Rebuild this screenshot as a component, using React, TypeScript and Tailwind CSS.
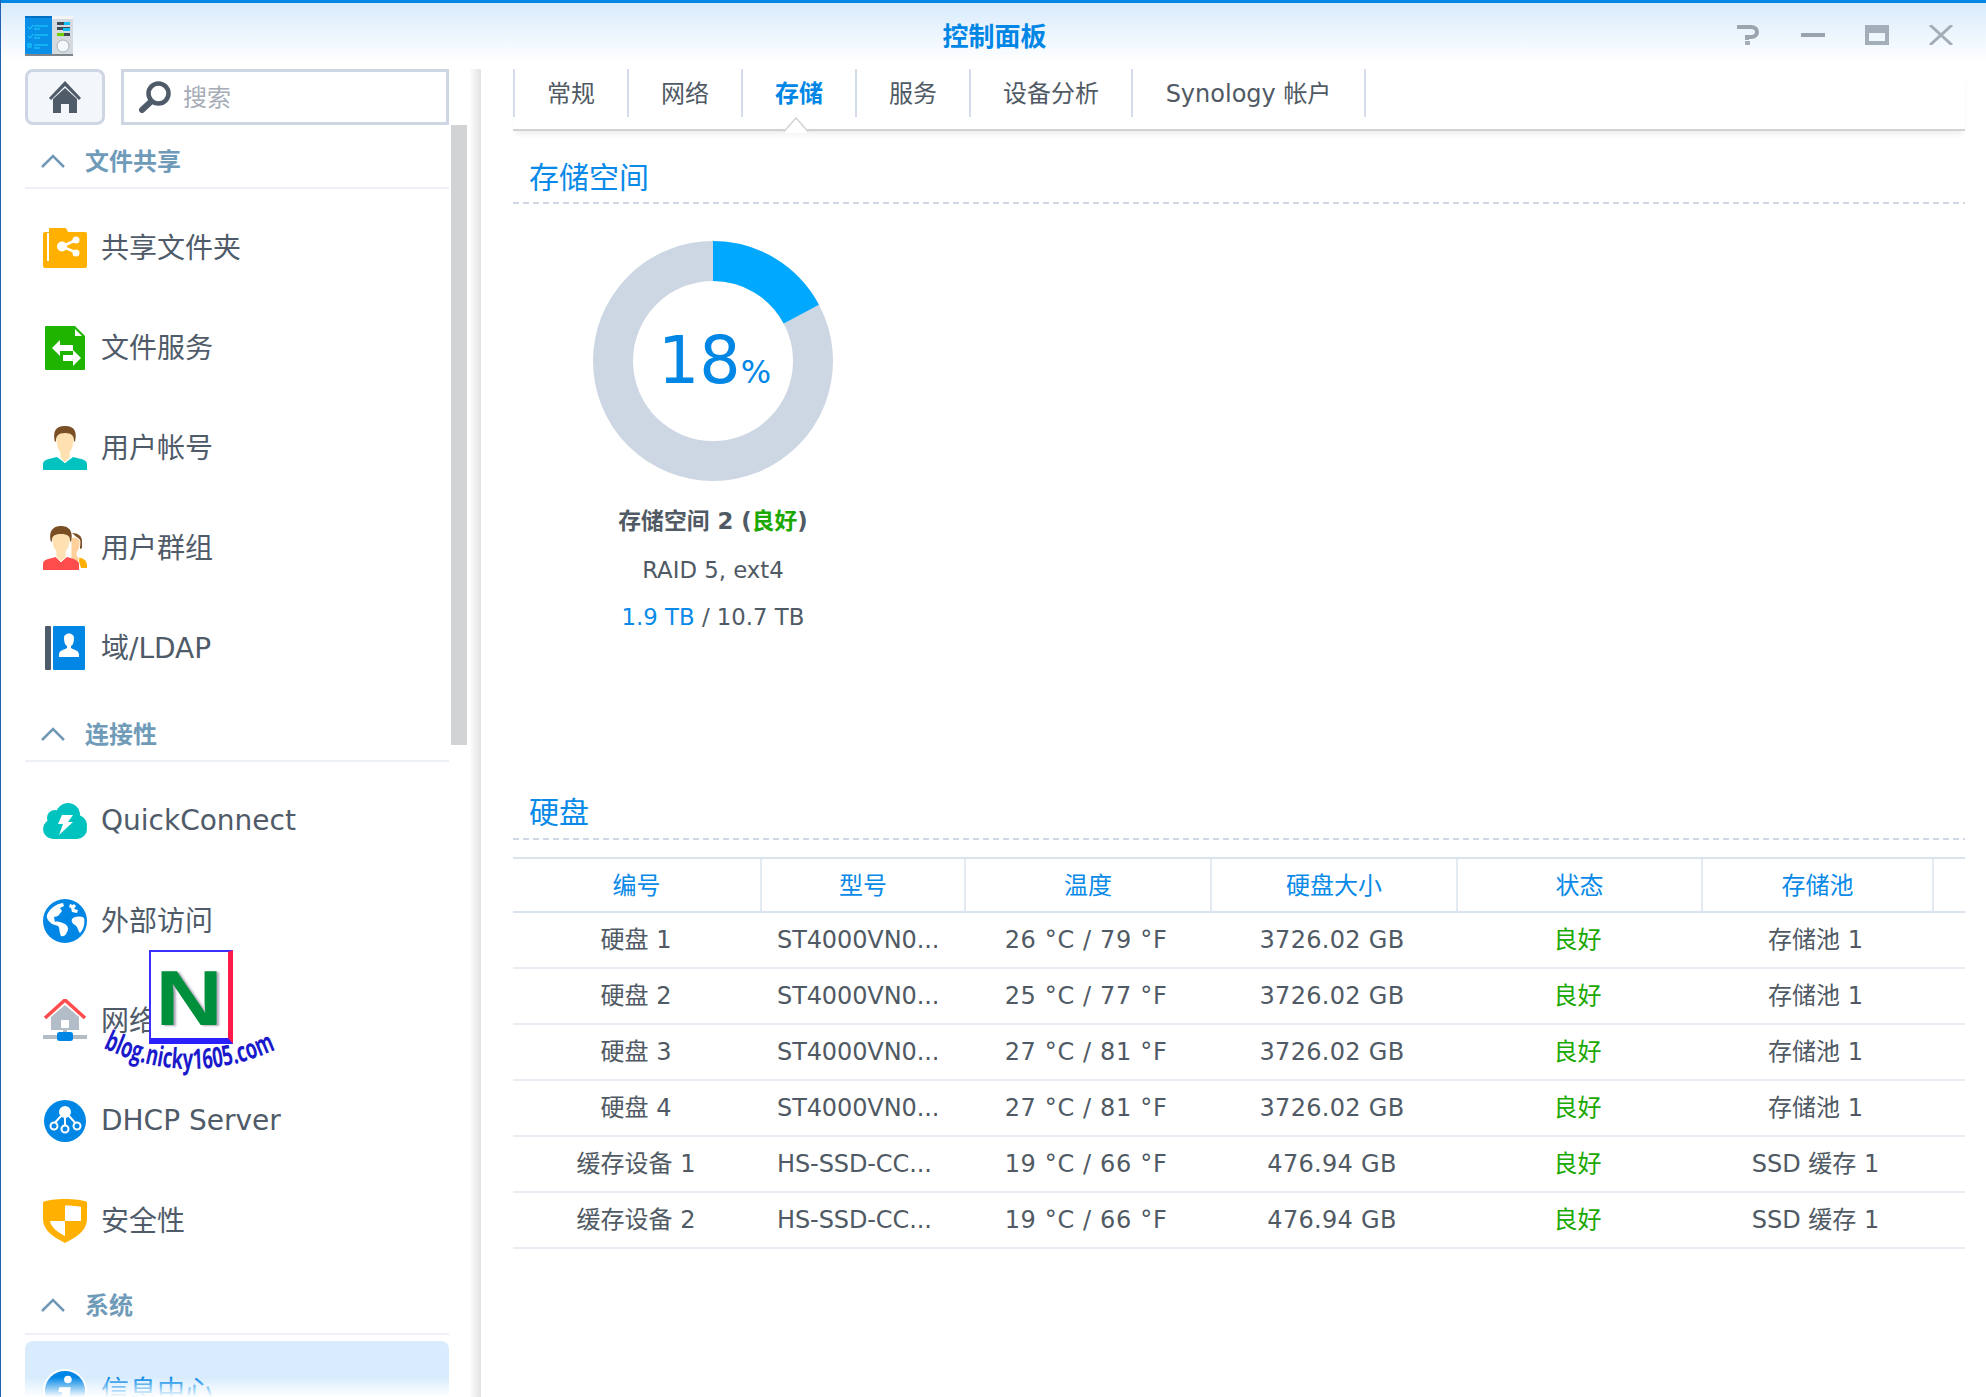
import type { ReactNode } from 'react';

const FONT = 'font-["DejaVu_Sans","Noto_Sans_CJK_SC",sans-serif]';

function AppLogo() {
  return (
    <svg width="48" height="40" viewBox="0 0 48 40">
      <rect x="0" y="0" width="48" height="39" rx="1" fill="#d4dade" />
      <rect x="27" y="0" width="21" height="3" fill="#f2f4f5" />
      <rect x="0" y="38" width="48" height="2" fill="#7e868c" />
      <rect x="0" y="0" width="27" height="38" rx="1" fill="#0a8fe8" />
      <rect x="0" y="0" width="27" height="2" fill="#0070c4" />
      <path d="M3 11l2 2 3-4M3 20l2 2 3-4" stroke="#19d4ff" strokeWidth="1" fill="none" />
      <rect x="3" y="28" width="3" height="3" fill="none" stroke="#19d4ff" strokeWidth="1" />
      <path d="M9 10h14M9 13h6M9 19h14M9 22h6M9 29h14M9 32h6" stroke="#19d4ff" strokeWidth="1" />
      <rect x="32" y="6" width="13" height="3" fill="#3e4a55" />
      <rect x="39" y="6" width="6" height="3" fill="#10c0f5" />
      <rect x="32" y="11" width="13" height="3" fill="#3e4a55" />
      <rect x="38" y="12" width="7" height="3" fill="#10c0f5" />
      <rect x="32" y="17" width="13" height="3" fill="#3e4a55" />
      <rect x="32" y="17" width="7" height="3" fill="#6fd000" />
      <circle cx="38" cy="30" r="6" fill="#f4f8fa" stroke="#aab3b8" />
    </svg>
  );
}

function HomeIcon() {
  return (
    <svg width="32" height="32" viewBox="0 0 32 32" fill="#4f5b69">
      <path d="M16 0L32 17l-2 2L16 5 2 19l-2-2z" />
      <path d="M4 18L16 7l12 11v14H20V23h-8v9H4z" />
    </svg>
  );
}

function SearchIcon() {
  return (
    <svg width="32" height="32" viewBox="0 0 32 32" fill="none" stroke="#4f5b69">
      <circle cx="19.5" cy="12.5" r="10" strokeWidth="4.5" />
      <path d="M11.5 21L3 29" strokeWidth="6" strokeLinecap="round" />
    </svg>
  );
}

function FolderIcon() {
  return (
    <svg width="44" height="40" viewBox="0 0 44 40">
      <path d="M0 6a2 2 0 0 1 2-2h4V1a1 1 0 0 1 1-1h16l2 4h17a2 2 0 0 1 2 2v32a2 2 0 0 1-2 2H2a2 2 0 0 1-2-2z" fill="#ffb000" />
      <rect x="4" y="5" width="2" height="28" fill="#fff" />
      <path d="M33 12L19 18.5 33 24.5" stroke="#fff" strokeWidth="2.5" fill="none" />
      <circle cx="33" cy="12" r="3.5" fill="#fff" />
      <circle cx="19" cy="18.5" r="5" fill="#fff" />
      <circle cx="33" cy="25" r="3.5" fill="#fff" />
    </svg>
  );
}

function FileIcon() {
  return (
    <svg width="40" height="44" viewBox="0 0 40 44">
      <path d="M1 0h29l10 10v33a1 1 0 0 1-1 1H1a1 1 0 0 1-1-1V1a1 1 0 0 1 1-1z" fill="#1fb400" />
      <path d="M30 3l7 7h-7z" fill="#fff" />
      <path d="M7 22l8-8v5h13v6H15v5z" fill="#fff" />
      <path d="M36 32l-8 8v-5H18v-6h10v-5z" fill="#fff" />
    </svg>
  );
}

function UserIcon() {
  return (
    <svg width="44" height="44" viewBox="0 0 44 44">
      <path d="M0 44v-6c0-4 5-5 14-7l8 6 8-6c9 2 14 3 14 7v6z" fill="#00c3c0" />
      <path d="M13 10c0-8 18-8 18 0 0 8-1 13-4 16v5l-5 6-5-6v-5c-3-3-4-8-4-16z" fill="#ffe0b0" stroke="#fff" strokeWidth="0.8" />
      <path d="M12 16C9 3 15 0 22 0s13 3 10 16l-1-1c0-5-2-8-9-8s-9 3-9 8z" fill="#7a4f25" />
    </svg>
  );
}

function GroupIcon() {
  return (
    <svg width="44" height="44" viewBox="0 0 44 44">
      <path d="M35 32c5-1 9 3 9 8v2h-6z" fill="#ffb000" />
      <path d="M29 7c6 0 10 3 10 8v7l-2 1V14z" fill="#7a4f25" />
      <path d="M28 12c4-2 9 0 9 4 0 5-1 8-3 10v4l2 2-1 6-7-6z" fill="#ffd09a" stroke="#fff" strokeWidth="0.8" />
      <path d="M0 44v-6c0-4 4-5 13-7l5 5 6-5c8 2 12 4 12 7v6z" fill="#ff4c4c" />
      <path d="M9 11c0-7 18-7 18 0 0 7-1 11-4 14v6l-5 5-5-5v-6c-3-3-4-7-4-14z" fill="#ffe0b0" stroke="#fff" strokeWidth="0.8" />
      <path d="M8 16C5 4 11 0 18 0s13 4 10 16l-1-1c0-5-2-7-9-7s-9 2-9 7z" fill="#7a4f25" />
    </svg>
  );
}

function LdapIcon() {
  return (
    <svg width="40" height="44" viewBox="0 0 40 44">
      <rect x="0" y="0" width="6" height="44" rx="1" fill="#4d5b6b" />
      <rect x="8" y="0" width="32" height="44" rx="1" fill="#0086e5" />
      <path d="M19 12c0-6 10-6 10 0 0 4-1 7-3 8v2c3 2 8 2 8 7v2H14v-2c0-5 5-5 8-7v-2c-2-1-3-4-3-8z" fill="#fff" />
    </svg>
  );
}

function CloudIcon() {
  return (
    <svg width="44" height="36" viewBox="0 0 44 36">
      <g fill="#00c3bf">
        <circle cx="25" cy="12" r="12" />
        <circle cx="12" cy="15" r="8" />
        <circle cx="34" cy="22" r="10" />
        <rect x="0" y="16" width="44" height="20" rx="10" />
      </g>
      <path d="M19 12h11l-5 7h5L16 32l4-11h-5z" fill="#fff" />
    </svg>
  );
}

function GlobeIcon() {
  return (
    <svg width="44" height="44" viewBox="0 0 44 44">
      <circle cx="22" cy="22" r="22" fill="#0086e5" />
      <path d="M20 4C13 5 7 9 4 16c-1 4 2 6 5 9l6 2c2 2 1 6 3 10 3 1 5-1 6-4 2-3 1-6-2-8-4-2-8-3-10-2l-1-5 4-1 4-5-2-3 4-2z" fill="#fff" />
      <path d="M29 20c3-3 9-3 12-1 1 5 0 11-4 15-2-2-2-6-5-8-2-1-4-3-3-6zM27 5l3 1 1-1 2 2-2 3 4 1-1 3-5-1-1-4-2-1z" fill="#fff" />
    </svg>
  );
}

function HouseIcon() {
  return (
    <svg width="44" height="44" viewBox="0 0 44 44">
      <path d="M8 18L22 6l14 12v13H8z" fill="#b3bdc8" />
      <path d="M2 19L22 1l20 18" fill="none" stroke="#ff4c4c" strokeWidth="3.500" />
      <rect x="18" y="21" width="8" height="8" rx="1" fill="#fff" />
      <rect x="20" y="31" width="4" height="5" fill="#b3bdc8" />
      <rect x="0" y="36" width="44" height="4" fill="#b3bdc8" />
      <rect x="14" y="33" width="16" height="9" rx="2.500" fill="#0086e5" />
    </svg>
  );
}

function DhcpIcon() {
  return (
    <svg width="42" height="42" viewBox="0 0 42 42">
      <circle cx="21" cy="21" r="21" fill="#0086e5" />
      <circle cx="21" cy="12" r="6" fill="#fff" />
      <path d="M21 14v16M17 16L8 26M25 16l9 10" stroke="#fff" strokeWidth="2" />
      <circle cx="21" cy="29" r="3.500" fill="#0086e5" stroke="#fff" strokeWidth="2" />
      <circle cx="10" cy="26" r="3.500" fill="#0086e5" stroke="#fff" strokeWidth="2" />
      <circle cx="33" cy="26" r="3.500" fill="#0086e5" stroke="#fff" strokeWidth="2" />
    </svg>
  );
}

function ShieldIcon() {
  return (
    <svg width="44" height="44" viewBox="0 0 44 44">
      <path d="M0 3c8-4 36-4 44 0v17c0 10-8 17-22 24C8 37 0 30 0 20z" fill="#ffb000" />
      <path d="M22 6.500c6 0 12 .5 16 1.500v14H22zM22 22H7c1 6 7 11 15 15z" fill="#fff" />
    </svg>
  );
}

function InfoIcon() {
  return (
    <svg width="46" height="46" viewBox="0 0 46 46">
      <circle cx="23" cy="23" r="22" fill="#0086e5" stroke="#fff" strokeWidth="2" />
      <circle cx="26" cy="11" r="4" fill="#fff" />
      <path d="M17 19h12l-3 18h-8l2-13h-4z" fill="#fff" />
    </svg>
  );
}

function Chevron() {
  return (
    <svg width="24" height="14" viewBox="0 0 24 14" fill="none" stroke="#7098b5" strokeWidth="2.500">
      <path d="M1 13L12 2l11 11" />
    </svg>
  );
}

function GroupHeader({ label, last }: { label: string; last?: boolean }) {
  return (
    <div
      className={`flex h-[64px] items-center border-b-2 border-[#edf0f4] pl-[16px] ${last ? 'mb-[6px] pt-[6px]' : 'mb-[9px] pt-[9px]'}`}
    >
      <Chevron />
      <span className="ml-[20px] pt-[2px] text-[24px] font-bold text-[#6f9bb9]">{label}</span>
    </div>
  );
}

function NavItem({
  icon,
  label,
  active,
  latin,
}: {
  icon: ReactNode;
  label: string;
  active?: boolean;
  latin?: boolean;
}) {
  return (
    <div className={`flex h-[100px] items-center rounded-lg ${active ? 'bg-[#d8ecfd]' : ''}`}>
      <div className="ml-[18px] mr-[14px] flex w-[44px] justify-center">{icon}</div>
      <span className={`text-[28px] ${latin ? '' : 'pt-[2px]'} ${active ? 'text-[#0086e5]' : 'text-[#4f5b69]'}`}>{label}</span>
    </div>
  );
}

function Sidebar() {
  return (
    <aside className="relative flex w-[480px] shrink-0 flex-col pl-[24px]">
      <div className="flex h-[56px] w-[424px] gap-[16px]">
        <div className="flex w-[80px] items-center justify-center rounded-lg border-[3px] border-[#cdd6e2] bg-[#f3f6fa]">
          <HomeIcon />
        </div>
        <div className="flex flex-1 items-center border-[3px] border-[#cdd6e2] pl-[15px]">
          <SearchIcon />
          <span className="ml-[12px] pt-[2px] text-[24px] text-[#a6adb7]">搜索</span>
        </div>
      </div>
      <div className="relative w-[442px] flex-1 overflow-hidden">
        <div className="absolute left-[426px] top-0 h-[620px] w-[16px] bg-[#d2d3d5]" />
        <div className="w-[424px]">
          <GroupHeader label="文件共享" />
          <NavItem icon={<FolderIcon />} label="共享文件夹" />
          <NavItem icon={<FileIcon />} label="文件服务" />
          <NavItem icon={<UserIcon />} label="用户帐号" />
          <NavItem icon={<GroupIcon />} label="用户群组" />
          <NavItem icon={<LdapIcon />} label="域/LDAP" />
          <GroupHeader label="连接性" />
          <NavItem icon={<CloudIcon />} label="QuickConnect" latin />
          <NavItem icon={<GlobeIcon />} label="外部访问" />
          <NavItem icon={<HouseIcon />} label="网络" />
          <NavItem icon={<DhcpIcon />} label="DHCP Server" latin />
          <NavItem icon={<ShieldIcon />} label="安全性" />
          <GroupHeader label="系统" last />
          <NavItem icon={<InfoIcon />} label="信息中心" active />
        </div>
        <div className="absolute bottom-0 left-0 h-[20px] w-full bg-gradient-to-b from-white/0 to-white" />
      </div>
      <div className="absolute bottom-0 right-0 top-0 w-[12px] bg-gradient-to-r from-white to-[#e2e2e2]" />
    </aside>
  );
}

const TABS = [
  { label: '常规', width: 'w-[114px]' },
  { label: '网络', width: 'w-[114px]' },
  { label: '存储', width: 'w-[114px]', active: true },
  { label: '服务', width: 'w-[114px]' },
  { label: '设备分析', width: 'w-[162px]' },
  { label: 'Synology 帐户', width: 'w-[233px]' },
];

function Tabs() {
  return (
    <div className="relative h-[62px] border-b-2 border-[#d2d2d2] shadow-[0_5px_5px_-2px_rgba(0,0,0,0.07)]">
      <div className="flex h-[48px] border-l-2 border-[#d3dce8]">
        {TABS.map((tab) => (
          <div
            key={tab.label}
            className={`flex items-center justify-center border-r-2 border-[#d3dce8] pt-[2px] text-[24px] ${tab.width} ${
              tab.active ? 'font-bold text-[#0086e5]' : 'text-[#505a64]'
            }`}
          >
            {tab.label}
          </div>
        ))}
      </div>
      <svg className="absolute left-[270px] top-[48px]" width="26" height="16" viewBox="0 0 26 16">
        <path d="M0 14.500h1L13 .8 25 14.500h1V16H0z" fill="#fff" />
        <path d="M0 14h1.500L13 1l11.500 13H26" fill="none" stroke="#d2d2d2" strokeWidth="1.500" />
      </svg>
    </div>
  );
}

function SectionTitle({ label, height, gap }: { label: string; height: string; gap: string }) {
  return (
    <div className={`flex flex-col justify-end ${height}`}>
      <h2 className={`pl-[16px] text-[30px] font-normal leading-[42px] text-[#0a8ae8] ${gap}`}>{label}</h2>
      <div className="h-[2px] bg-[repeating-linear-gradient(90deg,#cfd8e4_0_6px,transparent_6px_10px)]" />
    </div>
  );
}

function Donut() {
  return (
    <div className="relative h-[240px] w-[240px]">
      <svg width="240" height="240" viewBox="0 0 240 240" className="-rotate-90">
        <circle cx="120" cy="120" r="100" fill="none" stroke="#cdd7e3" strokeWidth="40" />
        <circle cx="120" cy="120" r="100" fill="none" stroke="#00a9ff" strokeWidth="40" strokeDasharray="108 628.3" />
      </svg>
      <div className="absolute inset-0 flex items-baseline justify-center pl-[3px] pt-[82px] text-[#0086e5]">
        <span className="text-[65px] leading-[76px]">18</span>
        <span className="text-[32px]">%</span>
      </div>
    </div>
  );
}

const COLUMNS = [
  { label: '编号', width: 'w-[249px]' },
  { label: '型号', width: 'w-[204px]' },
  { label: '温度', width: 'w-[246px]' },
  { label: '硬盘大小', width: 'w-[246px]' },
  { label: '状态', width: 'w-[245px]' },
  { label: '存储池', width: 'w-[231px]' },
];

const DISKS = [
  ['硬盘 1', 'ST4000VN0...', '26 °C / 79 °F', '3726.02 GB', '存储池 1'],
  ['硬盘 2', 'ST4000VN0...', '25 °C / 77 °F', '3726.02 GB', '存储池 1'],
  ['硬盘 3', 'ST4000VN0...', '27 °C / 81 °F', '3726.02 GB', '存储池 1'],
  ['硬盘 4', 'ST4000VN0...', '27 °C / 81 °F', '3726.02 GB', '存储池 1'],
  ['缓存设备 1', 'HS-SSD-CC...', '19 °C / 66 °F', '476.94 GB', 'SSD 缓存 1'],
  ['缓存设备 2', 'HS-SSD-CC...', '19 °C / 66 °F', '476.94 GB', 'SSD 缓存 1'],
];

function DiskTable() {
  return (
    <div className="mt-[17px] text-[24px]">
      <div className="flex h-[56px] border-b-2 border-t-2 border-[#dbe4ee] text-[#0a8ae8]">
        {COLUMNS.map((col) => (
          <div key={col.label} className={`flex items-center justify-center border-r-2 border-[#e3eaf2] pt-[2px] ${col.width}`}>
            {col.label}
          </div>
        ))}
      </div>
      {DISKS.map((disk) => (
        <div key={disk[0]} className="flex h-[56px] items-center border-b-2 border-[#e8edf3] text-[#505a64]">
          <div className="w-[246px] text-center">{disk[0]}</div>
          <div className="w-[204px] pl-[18px] tracking-[-0.1px]">{disk[1]}</div>
          <div className="w-[246px] text-center tracking-[0.65px]">{disk[2]}</div>
          <div className="w-[246px] text-center tracking-[0.3px]">{disk[3]}</div>
          <div className="w-[245px] text-center text-[#1ba800]">良好</div>
          <div className="w-[231px] text-center">{disk[4]}</div>
        </div>
      ))}
    </div>
  );
}

function Watermark() {
  return (
    <>
      <div className="absolute left-[148px] top-[950px] flex h-[94px] w-[84px] items-center justify-center border-b-[6px] border-l-2 border-r-[5px] border-t-2 border-b-[#2a1fff] border-l-[#3a30ff] border-r-[#ff1a4a] border-t-[#3a30ff] bg-white pt-[5px]">
        <span className='scale-x-[1.2] font-["Liberation_Sans",sans-serif] text-[78px] font-bold leading-none text-[#00903c] [text-shadow:2px_1px_2px_rgba(60,40,90,0.4)]'>
          N
        </span>
      </div>
      <svg className="absolute left-[100px] top-[1020px]" width="185" height="70" viewBox="100 1020 185 70">
        <defs>
          <path id="wm-arc" d="M102 1048Q190 1090 278 1048" fill="none" />
        </defs>
        <text fontFamily="Open Sans, sans-serif" fontSize="28" fontWeight="700" fill="#1a1acc">
          <textPath href="#wm-arc" textLength="179" lengthAdjust="spacingAndGlyphs">
            blog.nicky1605.com
          </textPath>
        </text>
      </svg>
    </>
  );
}

export default function App() {
  return (
    <div className={`relative flex h-[1397px] w-[1986px] flex-col overflow-hidden border-l border-[#2060b0] bg-white ${FONT}`}>
      <header className="relative flex h-[62px] shrink-0 items-center justify-center border-t-[3px] border-[#0086e5] bg-gradient-to-b from-[#d8ebfb] to-white">
        <div className="absolute left-[24px] top-[13px]">
          <AppLogo />
        </div>
        <span className="pl-[2px] pt-[9px] text-[26px] font-bold text-[#0086e5]">控制面板</span>
        <div className="absolute right-[33px] top-[22px] flex gap-[40px]">
          <svg width="24" height="20" viewBox="0 0 24 20">
            <path d="M0 2h14c8 0 8 10 0 10h-4v3" fill="none" stroke="#9aa5af" strokeWidth="4" />
            <rect x="8" y="16" width="5" height="4" fill="#a3aeb8" />
          </svg>
          <svg width="24" height="20" viewBox="0 0 24 20">
            <rect x="0" y="8" width="24" height="4" fill="#98a3ad" />
          </svg>
          <svg width="24" height="20" viewBox="0 0 24 20">
            <path d="M0 0h24v20H0zM4 8v8h16V8z" fill="#a3aeb8" fillRule="evenodd" />
          </svg>
          <svg width="24" height="20" viewBox="0 0 24 20">
            <path d="M1 0l22 20M23 0L1 20" stroke="#a3aeb8" strokeWidth="3" />
          </svg>
        </div>
      </header>
      <main className="mt-[7px] flex min-h-0 flex-1">
        <Sidebar />
        <div className="min-w-0 flex-1 pl-[32px] pr-[21px]">
          <Tabs />
          <SectionTitle label="存储空间" height="h-[73px]" gap="mb-[3px]" />
          <div className="flex w-[400px] flex-col items-center pt-[37px] text-[22.8px] text-[#505a64]">
            <Donut />
            <div className="mt-[17px] flex h-[47px] items-center font-bold">
              存储空间 2 (<span className="text-[#1ba800]">良好</span>)
            </div>
            <div className="flex h-[48px] items-center pt-[2px]">RAID 5, ext4</div>
            <div className="flex h-[47px] items-center pt-[2px]">
              <span className="text-[#0a8ae8]">1.9 TB</span>
              <span className="whitespace-pre"> / 10.7 TB</span>
            </div>
          </div>
          <SectionTitle label="硬盘" height="mt-[136px] h-[64px]" gap="mb-[4px]" />
          <DiskTable />
        </div>
      </main>
      <Watermark />
    </div>
  );
}
